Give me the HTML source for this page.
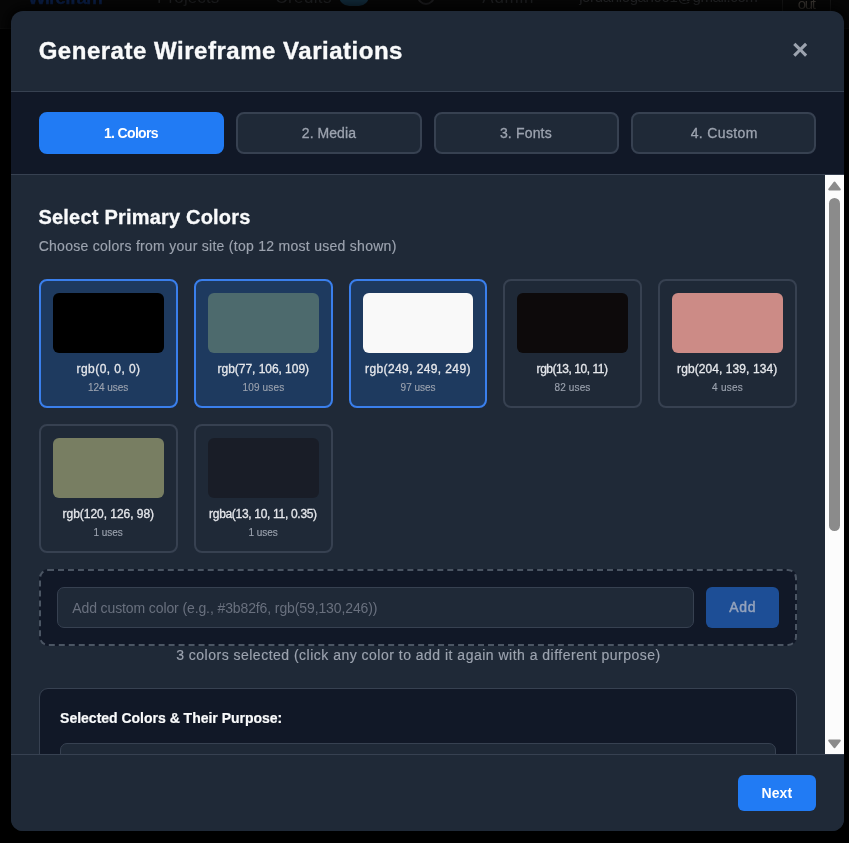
<!DOCTYPE html>
<html lang="en">
<head>
<meta charset="utf-8">
<title>Generate Wireframe Variations</title>
<style>
*{box-sizing:border-box;margin:0;padding:0}
html,body{width:849px;height:843px;overflow:hidden;background:#000}
body{font-family:"Liberation Sans",sans-serif;color:#f3f4f6;position:relative}
#root{position:absolute;left:0;top:0;width:849px;height:843px;overflow:hidden;will-change:transform}
.t{position:absolute;white-space:nowrap}
.a{position:absolute}
.pagehdr{left:0;top:0;width:849px;height:29px;background:#070707;border-bottom:1px solid #0c0c0c}
.pagehdr .t{color:#222325;font-size:18px;line-height:20px}
.modal{left:11px;top:11px;width:833px;height:820px;background:#1f2937;border-radius:12px;box-shadow:0 0 14px 4px rgba(0,0,0,.85)}
.hline{left:11px;width:833px;height:1px;background:#374151}
.tabsbg{left:11px;top:92px;width:833px;height:82px;background:#111827}
.tab{top:112px;height:42px;border-radius:8px;border:2px solid #374151;background:#1f2937}
.tab.on{background:#217bf4;border-color:#217bf4}
.card{width:139px;height:129px;border-radius:8px;border:2px solid #374151;background:#1f2937}
.card.on{border-color:#3a7fec;background:#1e3a5f}
.sw{height:60px;border-radius:6px}
.dash{left:39px;top:569px;width:758px;height:77px;border:2px dashed #4b5563;border-radius:9px;background:#111827}
.inp{left:57px;top:587px;width:637px;height:41px;border:1px solid #374151;border-radius:7px;background:#1f2937}
.addb{left:706px;top:587px;width:73px;height:41px;border-radius:6px;background:#1d4e96}
.selbox{left:39px;top:688px;width:758px;height:80px;border:1px solid #374151;border-radius:9px;background:#111827}
.selin{left:60px;top:743px;width:716px;height:40px;border:1px solid #374151;border-radius:7px;background:#1f2937}
.clip{left:11px;top:175px;width:814px;height:579px;overflow:hidden}
.sb{left:825px;top:175px;width:19px;height:579px;background:#fcfcfc}
.thumb{left:829px;top:198px;width:11px;height:333px;border-radius:5.5px;background:#8b8b8b}
.ftr{left:11px;top:754px;width:833px;height:77px;background:#1f2937;border-top:1px solid #374151;border-radius:0 0 12px 12px}
.nextb{left:738px;top:775px;width:78px;height:36px;border-radius:6px;background:#217bf4}
</style>
</head>
<body>
<div id="root">
<div class="a pagehdr">
<div class="t" style="left:28.10px;top:-16.08px;font-size:19px;line-height:28px;color:#0b1f47;font-weight:700;letter-spacing:-1.06px;-webkit-text-stroke:0.3px #0b1f47;">Wirefram</div>
<div class="t" style="left:157.10px;top:-14.89px;font-size:17px;line-height:26px;color:#1f2022;font-weight:400;letter-spacing:0.11px;">Projects</div>
<div class="t" style="left:275.35px;top:-14.89px;font-size:17px;line-height:26px;color:#1f2022;font-weight:400;letter-spacing:0.38px;">Credits</div>
<div class="t" style="left:482.30px;top:-14.89px;font-size:17px;line-height:26px;color:#1f2022;font-weight:400;letter-spacing:0.75px;">Admin</div>
<div class="t" style="left:579.15px;top:-13.70px;font-size:15px;line-height:22px;color:#252628;font-weight:400;letter-spacing:-0.36px;">jordanlogan001@gmail.com</div>
<div class="t" style="left:797.85px;top:-7.40px;font-size:15px;line-height:22px;color:#3c3834;font-weight:400;letter-spacing:-1.35px;">out</div>
<div class="a" style="left:339px;top:-15px;width:30px;height:21px;border-radius:10px;background:#112a3a"></div>
<div class="a" style="left:417px;top:-13px;width:18px;height:18px;border-radius:9px;border:2px solid #1c1c1e"></div>
<div class="a" style="left:782px;top:-30px;width:49px;height:54px;border:1px solid #161616;border-radius:6px"></div>
</div>
<div class="a modal"></div>
<h2 class="t" style="left:38.65px;top:33.38px;font-size:24px;line-height:36px;color:#f9fafb;font-weight:700;letter-spacing:0.52px;-webkit-text-stroke:0.35px #f9fafb;">Generate Wireframe Variations</h2>
<div class="t" style="left:792px;top:30px;font-size:28px;font-weight:700;line-height:40px;color:#9ca3af">×</div>
<div class="a hline" style="top:91px"></div>
<div class="a tabsbg"></div>
<div class="a tab on" style="left:39px;width:185px"></div>
<div class="a tab" style="left:236px;width:186px"></div>
<div class="a tab" style="left:434px;width:185px"></div>
<div class="a tab" style="left:631px;width:185px"></div>
<div class="t" style="left:104.00px;top:123.45px;font-size:14px;line-height:21px;color:#ffffff;font-weight:700;letter-spacing:-0.67px;">1. Colors</div>
<div class="t" style="left:301.80px;top:123.45px;font-size:14px;line-height:21px;color:#9ca3af;font-weight:400;letter-spacing:0.06px;-webkit-text-stroke:0.3px #9ca3af;">2. Media</div>
<div class="t" style="left:499.90px;top:123.45px;font-size:14px;line-height:21px;color:#9ca3af;font-weight:400;letter-spacing:0.17px;-webkit-text-stroke:0.3px #9ca3af;">3. Fonts</div>
<div class="t" style="left:690.65px;top:123.45px;font-size:14px;line-height:21px;color:#9ca3af;font-weight:400;letter-spacing:0.36px;-webkit-text-stroke:0.3px #9ca3af;">4. Custom</div>
<div class="a hline" style="top:174px"></div>
<h3 class="t" style="left:38.50px;top:201.87px;font-size:20px;line-height:30px;color:#f9fafb;font-weight:700;letter-spacing:0.2px;-webkit-text-stroke:0.3px #f9fafb;">Select Primary Colors</h3>
<p class="t" style="left:38.65px;top:235.85px;font-size:14px;line-height:21px;color:#9ca3af;font-weight:400;letter-spacing:0.28px;-webkit-text-stroke:0.15px #9ca3af;">Choose colors from your site (top 12 most used shown)</p>
<div class="a card on" style="left:39px;top:279px;width:139px"><div class="a sw" style="left:12px;top:12px;width:111px;background:rgb(0,0,0)"></div></div>
<div class="t" style="left:76.60px;top:360.14px;font-size:12px;line-height:18px;color:#e5e7eb;font-weight:400;letter-spacing:0.43px;-webkit-text-stroke:0.3px #e5e7eb;">rgb(0, 0, 0)</div>
<div class="t" style="left:88.10px;top:380.14px;font-size:10px;line-height:15px;color:#9ca3af;font-weight:400;letter-spacing:-0.07px;-webkit-text-stroke:0.12px #9ca3af;">124 uses</div>
<div class="a card on" style="left:194px;top:279px;width:139px"><div class="a sw" style="left:12px;top:12px;width:111px;background:rgb(77,106,109)"></div></div>
<div class="t" style="left:217.60px;top:360.14px;font-size:12px;line-height:18px;color:#e5e7eb;font-weight:400;letter-spacing:-0.04px;-webkit-text-stroke:0.3px #e5e7eb;">rgb(77, 106, 109)</div>
<div class="t" style="left:242.60px;top:380.14px;font-size:10px;line-height:15px;color:#9ca3af;font-weight:400;letter-spacing:0.14px;-webkit-text-stroke:0.12px #9ca3af;">109 uses</div>
<div class="a card on" style="left:349px;top:279px;width:138px"><div class="a sw" style="left:12px;top:12px;width:110px;background:rgb(249,249,249)"></div></div>
<div class="t" style="left:365.10px;top:360.14px;font-size:12px;line-height:18px;color:#e5e7eb;font-weight:400;letter-spacing:0.39px;-webkit-text-stroke:0.3px #e5e7eb;">rgb(249, 249, 249)</div>
<div class="t" style="left:400.60px;top:380.14px;font-size:10px;line-height:15px;color:#9ca3af;font-weight:400;-webkit-text-stroke:0.12px #9ca3af;">97 uses</div>
<div class="a card" style="left:503px;top:279px;width:139px"><div class="a sw" style="left:12px;top:12px;width:111px;background:rgb(13,10,11)"></div></div>
<div class="t" style="left:536.60px;top:360.14px;font-size:12px;line-height:18px;color:#e5e7eb;font-weight:400;letter-spacing:-0.46px;-webkit-text-stroke:0.3px #e5e7eb;">rgb(13, 10, 11)</div>
<div class="t" style="left:554.60px;top:380.14px;font-size:10px;line-height:15px;color:#9ca3af;font-weight:400;letter-spacing:0.12px;-webkit-text-stroke:0.12px #9ca3af;">82 uses</div>
<div class="a card" style="left:658px;top:279px;width:139px"><div class="a sw" style="left:12px;top:12px;width:111px;background:rgb(204,139,134)"></div></div>
<div class="t" style="left:677.10px;top:360.14px;font-size:12px;line-height:18px;color:#e5e7eb;font-weight:400;letter-spacing:0.08px;-webkit-text-stroke:0.3px #e5e7eb;">rgb(204, 139, 134)</div>
<div class="t" style="left:712.10px;top:380.14px;font-size:10px;line-height:15px;color:#9ca3af;font-weight:400;letter-spacing:0.26px;-webkit-text-stroke:0.12px #9ca3af;">4 uses</div>
<div class="a card" style="left:39px;top:424px;width:139px"><div class="a sw" style="left:12px;top:12px;width:111px;background:rgb(120,126,98)"></div></div>
<div class="t" style="left:62.60px;top:505.14px;font-size:12px;line-height:18px;color:#e5e7eb;font-weight:400;letter-spacing:-0.04px;-webkit-text-stroke:0.3px #e5e7eb;">rgb(120, 126, 98)</div>
<div class="t" style="left:93.60px;top:525.13px;font-size:10px;line-height:15px;color:#9ca3af;font-weight:400;letter-spacing:-0.08px;-webkit-text-stroke:0.12px #9ca3af;">1 uses</div>
<div class="a card" style="left:194px;top:424px;width:139px"><div class="a sw" style="left:12px;top:12px;width:111px;background:rgba(13,10,11,0.35)"></div></div>
<div class="t" style="left:209.10px;top:505.14px;font-size:12px;line-height:18px;color:#e5e7eb;font-weight:400;letter-spacing:-0.31px;-webkit-text-stroke:0.3px #e5e7eb;">rgba(13, 10, 11, 0.35)</div>
<div class="t" style="left:248.60px;top:525.13px;font-size:10px;line-height:15px;color:#9ca3af;font-weight:400;letter-spacing:-0.08px;-webkit-text-stroke:0.12px #9ca3af;">1 uses</div>
<div class="a dash"></div><div class="a inp"></div>
<div class="t" style="left:72.25px;top:597.65px;font-size:14px;line-height:21px;color:#69707e;font-weight:400;letter-spacing:-0.11px;">Add custom color (e.g., #3b82f6, rgb(59,130,246))</div>
<div class="a addb"></div>
<div class="t" style="left:729.30px;top:596.65px;font-size:14px;line-height:21px;color:#95a3bc;font-weight:400;letter-spacing:0.7px;-webkit-text-stroke:0.45px #95a3bc;">Add</div>
<p class="t" style="left:176.20px;top:644.75px;font-size:14px;line-height:21px;color:#9ca3af;font-weight:400;letter-spacing:0.49px;-webkit-text-stroke:0.15px #9ca3af;">3 colors selected (click any color to add it again with a different purpose)</p>
<div class="a selbox"></div>
<h4 class="t" style="left:60.10px;top:708.15px;font-size:14px;line-height:21px;color:#f9fafb;font-weight:700;letter-spacing:-0.01px;-webkit-text-stroke:0.2px #f9fafb;">Selected Colors &amp; Their Purpose:</h4>
<div class="a selin"></div>
<div class="a sb"></div><div class="a thumb"></div>
<svg class="a" style="left:825px;top:175px" width="19" height="579" viewBox="0 0 19 579"><path d="M9.5 7.6 L14.7 14.3 L4.3 14.3 Z" fill="#8b8b8b" stroke="#8b8b8b" stroke-width="2.2" stroke-linejoin="round"/><path d="M9.5 572.2 L14.7 565.5 L4.3 565.5 Z" fill="#8b8b8b" stroke="#8b8b8b" stroke-width="2.2" stroke-linejoin="round"/></svg>
<div class="a ftr"></div>
<div class="a nextb"></div>
<div class="t" style="left:761.50px;top:782.55px;font-size:14px;line-height:21px;color:#ffffff;font-weight:700;letter-spacing:0.07px;">Next</div>
</div>
</body>
</html>
